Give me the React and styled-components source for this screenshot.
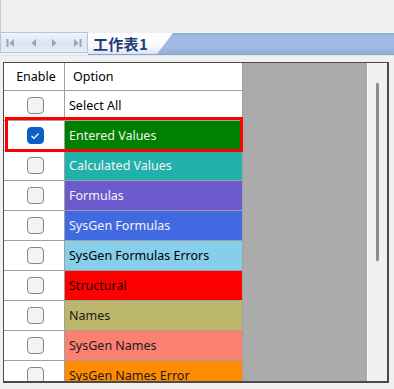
import styled, { createGlobalStyle } from "styled-components";

const Global = createGlobalStyle`
  html, body {
    margin: 0;
    padding: 0;
    background: #f0f0f0;
    font-family: "Noto Sans", "Liberation Sans", Arial, sans-serif;
    overflow: hidden;
  }
`;

const Page = styled.div`
  width: 394px;
  height: 389px;
  display: flex;
  flex-direction: column;
  background: #f0f0f0;
`;

const TopArea = styled.div`
  height: 32px;
  border-left: 1px solid #c4ccd8;
`;

const TabStrip = styled.div`
  display: flex;
  height: 23px;
  border-bottom: 1px solid #e2e6ee;
`;

const NavBox = styled.div`
  width: 88px;
  height: 21px;
  border: 1px solid #b6c4da;
  background: linear-gradient(#eef3fb, #dbe5f5 60%, #e8eefa);
  display: flex;
  align-items: center;
  gap: 12px;
  padding-left: 5px;
  box-sizing: border-box;
`;

const TabBand = styled.div`
  flex: 1;
  display: flex;
  margin-top: 1px;
  background: linear-gradient(#8ea9d8 0, #9fb9e4 15%, #a1bbe5 60%, #93acd8 100%);
  border-bottom: 1px solid #8da3c9;
`;

const Tab = styled.div`
  width: 85px;
  height: 100%;
  background: linear-gradient(#ffffff, #f6f8fc 70%, #d6e2f4);
  clip-path: polygon(0 0, 100% 0, calc(100% - 16px) 100%, 0 100%);
  display: flex;
  align-items: center;
  padding-left: 5px;
  box-sizing: border-box;
  font-family: "Noto Sans CJK SC", sans-serif;
  font-weight: 700;
  font-size: 15px;
  color: #1e3c78;
  letter-spacing: 0.3px;
`;

const Frame = styled.div`
  margin: 6px 0 0 3px;
  width: 386px;
  height: 321px;
  box-sizing: border-box;
  border: 1px solid #4a4a4a;
  border-right-width: 2px;
  border-bottom-width: 2px;
  display: flex;
  overflow: hidden;
`;

const GridArea = styled.div`
  flex: 1;
  position: relative;
  background: #ababab;
  overflow: hidden;
`;

const Table = styled.div`
  width: 239px;
  display: flex;
  flex-direction: column;
`;

const Row = styled.div`
  display: flex;
  height: ${(p) => (p.$header ? 27 : 29)}px;
  border-bottom: 1px solid #a0a0a0;
`;

const EnableCell = styled.div`
  width: 61px;
  box-sizing: border-box;
  border-right: 1px solid #a0a0a0;
  background: #fff;
  display: flex;
  align-items: center;
  justify-content: center;
  padding-left: ${(p) => (p.$header ? 4 : 0)}px;
  font-size: 12.5px;
  color: #000;
`;

const OptionCell = styled.div`
  width: 178px;
  box-sizing: border-box;
  border-right: 1px solid #a0a0a0;
  background: ${(p) => p.$bg || "#fff"};
  color: ${(p) => p.$fg || "#000"};
  display: flex;
  align-items: center;
  padding-left: ${(p) => (p.$header ? 8 : 4)}px;
  font-size: 12.5px;
  white-space: nowrap;
`;

const Check = styled.span`
  width: 17px;
  height: 17px;
  box-sizing: border-box;
  border-radius: 4px;
  border: 1px solid ${(p) => (p.$on ? "#0a5fc8" : "#868686")};
  background: ${(p) => (p.$on ? "#0a5fc8" : "#f3f3f3")};
  display: flex;
  align-items: center;
  justify-content: center;
  margin-left: 2px;
`;

const Highlight = styled.div`
  position: absolute;
  left: 1px;
  top: 54px;
  width: 238px;
  height: 35px;
  border: 3px solid #ff0000;
  box-sizing: border-box;
  pointer-events: none;
`;

const ScrollBar = styled.div`
  width: 20px;
  border-left: 1px solid #fafafa;
  background: #f0f0f0;
  display: flex;
  justify-content: center;
  padding-top: 20px;
  box-sizing: border-box;
`;

const Thumb = styled.div`
  width: 3px;
  height: 178px;
  background: #8c8c8c;
  border-radius: 1px;
`;

const rows = [
  { label: "Select All" },
  { label: "Entered Values", bg: "#008000", fg: "#f4f4e8", on: true },
  { label: "Calculated Values", bg: "#20b2aa", fg: "#f4f4f4" },
  { label: "Formulas", bg: "#6a5acd", fg: "#f4f4f4" },
  { label: "SysGen Formulas", bg: "#4169e1", fg: "#f4f4f4" },
  { label: "SysGen Formulas Errors", bg: "#87ceeb" },
  { label: "Structural", bg: "#ff0000", fg: "#1a0000" },
  { label: "Names", bg: "#bdb76b", fg: "#1a1a1a" },
  { label: "SysGen Names", bg: "#fa8072", fg: "#1a1a1a" },
  { label: "SysGen Names Error", bg: "#ff8c00", fg: "#1a1a1a" },
];

const Arrow = ({ dir, bar }) => (
  <svg width="10" height="10" viewBox="0 0 10 10">
    {dir === "left" ? (
      <>
        {bar && <rect x="0.5" y="1" width="2" height="8" fill="#9ea3aa" />}
        <path d="M8 1 L3.5 5 L8 9 Z" fill="#9ea3aa" />
      </>
    ) : (
      <>
        <path d="M2 1 L6.5 5 L2 9 Z" fill="#9ea3aa" />
        {bar && <rect x="7.5" y="1" width="2" height="8" fill="#9ea3aa" />}
      </>
    )}
  </svg>
);

const Tick = () => (
  <svg width="10" height="8" viewBox="0 0 10 8">
    <path d="M1.5 4 L4 6.3 L8.5 1.5" fill="none" stroke="#fff" strokeWidth="1.2" />
  </svg>
);

export default function App() {
  return (
    <Page>
      <Global />
      <TopArea />
      <TabStrip>
        <NavBox>
          <Arrow dir="left" bar />
          <Arrow dir="left" />
          <Arrow dir="right" />
          <Arrow dir="right" bar />
        </NavBox>
        <TabBand>
          <Tab>工作表1</Tab>
        </TabBand>
      </TabStrip>
      <Frame>
        <GridArea>
          <Table>
            <Row $header>
              <EnableCell $header>Enable</EnableCell>
              <OptionCell $header>Option</OptionCell>
            </Row>
            {rows.map((r) => (
              <Row key={r.label}>
                <EnableCell>
                  <Check $on={r.on}>{r.on && <Tick />}</Check>
                </EnableCell>
                <OptionCell $bg={r.bg} $fg={r.fg}>
                  {r.label}
                </OptionCell>
              </Row>
            ))}
          </Table>
          <Highlight />
        </GridArea>
        <ScrollBar>
          <Thumb />
        </ScrollBar>
      </Frame>
    </Page>
  );
}
